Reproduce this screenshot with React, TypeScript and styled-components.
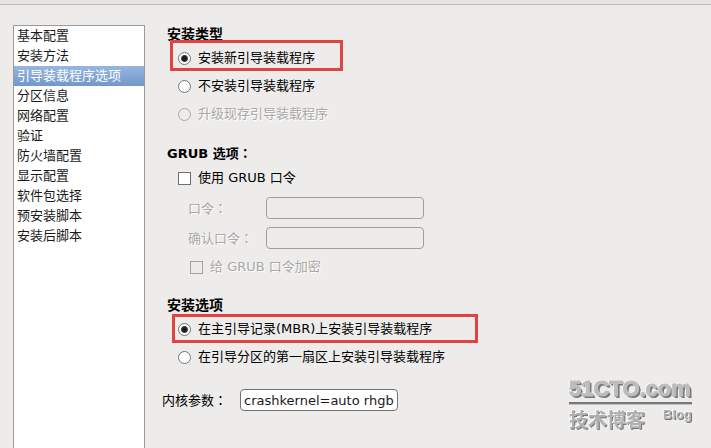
import React, { useState } from "react";
import styled, { createGlobalStyle, css } from "styled-components";

const GlobalStyle = createGlobalStyle`
  * { box-sizing: border-box; }
  body {
    margin: 0;
    background: #edeceb;
    color: #000;
    font: 13px/20px "DejaVu Sans", "Noto Sans CJK SC", sans-serif;
    overflow: hidden;
  }
`;

const Window = styled.div`
  display: flex;
  flex-direction: column;
  height: 100vh;
  overflow: hidden;
`;

const TopEdge = styled.div`
  flex: none;
  height: 5px;
  background: #e6e5e4;
  border-bottom: 1px solid #bcbbba;
`;

const Content = styled.div`
  display: flex;
  flex: 1;
  min-height: 0;
  padding: 20px 0 0 13px;
`;

const Sidebar = styled.nav`
  flex: none;
  width: 132px;
  background: #fff;
  border: 1px solid #9c9b9a;
  border-bottom: 0;
`;

const NavItem = styled.button<{ $active: boolean }>`
  display: block;
  width: 100%;
  height: 20px;
  padding: 0 3px;
  border: 0;
  background: ${(p) => (p.$active ? "linear-gradient(#95b6e0, #7198ca)" : "none")};
  color: ${(p) => (p.$active ? "#fff" : "#1a1a1a")};
  font: inherit;
  text-align: left;
  white-space: nowrap;
`;

const Form = styled.form`
  flex: 1;
  padding-left: 17px;
`;

const Group = styled.fieldset`
  margin: 0 0 15px 5px;
  padding: 0;
  border: 0;
  min-width: 0;
`;

const Heading = styled.legend<{ $large?: boolean }>`
  padding: 0;
  height: ${(p) => (p.$large ? 19 : 20)}px;
  line-height: ${(p) => (p.$large ? 19 : 20)}px;
  font-size: ${(p) => (p.$large ? 14 : 13)}px;
  font-weight: bold;
`;

const Colon = styled.span.attrs({ lang: "zh-TW" })`
  font-family: "Noto Sans CJK TC", sans-serif;
`;

const disabledText = css`
  color: #a9a8a6;
  text-shadow: 1px 1px 0 #fff;
`;

const Option = styled.label<{ $disabled?: boolean; $nested?: boolean; $tall?: boolean }>`
  position: relative;
  display: flex;
  align-items: center;
  gap: 7px;
  width: fit-content;
  height: ${(p) => (p.$tall ? 30 : 28)}px;
  margin-left: ${(p) => (p.$nested ? 23 : 11)}px;
  white-space: nowrap;
  ${(p) => p.$disabled && disabledText}
`;

const Highlight = styled.span<{ $wide?: boolean }>`
  position: absolute;
  top: ${(p) => (p.$wide ? -1 : -4)}px;
  bottom: ${(p) => (p.$wide ? 0 : 1)}px;
  left: ${(p) => (p.$wide ? -6 : -8)}px;
  right: ${(p) => (p.$wide ? -46 : -28)}px;
  border: 3px solid #e14341;
  pointer-events: none;
`;

const Radio = styled.input.attrs({ type: "radio" })`
  appearance: none;
  flex: none;
  width: 13px;
  height: 13px;
  margin: 0;
  border: 1px solid #747371;
  border-radius: 50%;
  background: #fff;
  &:checked {
    background: radial-gradient(circle, #1c1c1c 0 2px, #444 3px, #fff 4px);
  }
  &:disabled {
    border-color: #a9a8a6;
    background: #edeceb;
  }
`;

const Check = styled.input.attrs({ type: "checkbox" })`
  appearance: none;
  flex: none;
  width: 13px;
  height: 13px;
  margin: 0;
  border: 1px solid #6f6e6d;
  background: #fff;
  &:checked {
    background: #4a4a4a;
    box-shadow: inset 0 0 0 2px #fff;
  }
  &:disabled {
    border-color: #a3a2a1;
    background: #edeceb;
  }
`;

const TextInput = styled.input`
  width: 158px;
  height: 22px;
  padding: 0 0 0 3px;
  border: 1px solid #747371;
  border-radius: 4px;
  background: #fff;
  color: #1a1a1a;
  font: inherit;
  &:disabled {
    border-color: #a09f9e;
    background: #edeceb;
  }
`;

const Field = styled.div<{ $disabled?: boolean }>`
  display: grid;
  grid-template-columns: 78px auto;
  justify-content: start;
  align-items: center;
  height: ${(p) => (p.$disabled === undefined ? 28 : 30)}px;
  margin-left: ${(p) => (p.$disabled === undefined ? 0 : 21)}px;
  white-space: nowrap;
  label {
    ${(p) => p.$disabled && disabledText}
  }
`;

const Watermark = styled.div`
  position: fixed;
  right: 19px;
  bottom: 17px;
  width: 123px;
  color: #bdbdbd;
  font-weight: bold;
  text-shadow: -1px -1px 0 #fafafa, 1px 1px 0 #777, 2px 2px 0 #777;
`;

const SiteName = styled.div`
  border-bottom: 2px solid #777;
  font: bold 22px/26px "Liberation Sans", sans-serif;
  -webkit-text-stroke: 1px #bdbdbd;
  white-space: nowrap;
`;

const SiteTag = styled.div`
  display: flex;
  justify-content: space-between;
  padding-top: 2px;
  border-top: 1px solid #c4c4c4;
  line-height: 24px;
  font-family: "Noto Sans CJK SC", sans-serif;
  font-size: 19px;
  color: #b0b0b0;
  text-shadow: -1px -1px 0 #fafafa, 1px 1px 0 #777;
`;

const Blog = styled.span`
  font: bold 13px/16px "Liberation Sans", sans-serif;
`;

const pages = [
  "基本配置", "安装方法", "引导装载程序选项", "分区信息", "网络配置", "验证",
  "防火墙配置", "显示配置", "软件包选择", "预安装脚本", "安装后脚本",
];

export default function App() {
  const [page, setPage] = useState(2);
  const [usePassword, setUsePassword] = useState(false);
  const locked = !usePassword;

  return (
    <>
      <GlobalStyle />
      <Window lang="zh-CN">
        <TopEdge />
        <Content>
          <Sidebar>
            {pages.map((name, i) => (
              <NavItem key={name} type="button" $active={i === page} onClick={() => setPage(i)}>
                {name}
              </NavItem>
            ))}
          </Sidebar>
          <Form>
            <Group>
              <Heading $large>安装类型</Heading>
              <Option>
                <Radio name="type" defaultChecked />
                安装新引导装载程序
                <Highlight />
              </Option>
              <Option>
                <Radio name="type" />
                不安装引导装载程序
              </Option>
              <Option $disabled>
                <Radio name="type" disabled />
                升级现存引导装载程序
              </Option>
            </Group>
            <Group>
              <Heading>GRUB 选项<Colon>：</Colon></Heading>
              <Option $tall>
                <Check checked={usePassword} onChange={(e) => setUsePassword(e.target.checked)} />
                使用 GRUB 口令
              </Option>
              <Field $disabled={locked}>
                <label htmlFor="password">口令<Colon>：</Colon></label>
                <TextInput id="password" type="password" disabled={locked} />
              </Field>
              <Field $disabled={locked}>
                <label htmlFor="confirm">确认口令<Colon>：</Colon></label>
                <TextInput id="confirm" type="password" disabled={locked} />
              </Field>
              <Option $nested $disabled={locked}>
                <Check disabled={locked} />
                给 GRUB 口令加密
              </Option>
            </Group>
            <Group>
              <Heading $large>安装选项</Heading>
              <Option>
                <Radio name="target" defaultChecked />
                在主引导记录(MBR)上安装引导装载程序
                <Highlight $wide />
              </Option>
              <Option>
                <Radio name="target" />
                在引导分区的第一扇区上安装引导装载程序
              </Option>
            </Group>
            <Field>
              <label htmlFor="kernel">内核参数<Colon>：</Colon></label>
              <TextInput id="kernel" defaultValue="crashkernel=auto rhgb" />
            </Field>
          </Form>
        </Content>
        <Watermark>
          <SiteName>51CTO.com</SiteName>
          <SiteTag>
            技术博客
            <Blog>Blog</Blog>
          </SiteTag>
        </Watermark>
      </Window>
    </>
  );
}
